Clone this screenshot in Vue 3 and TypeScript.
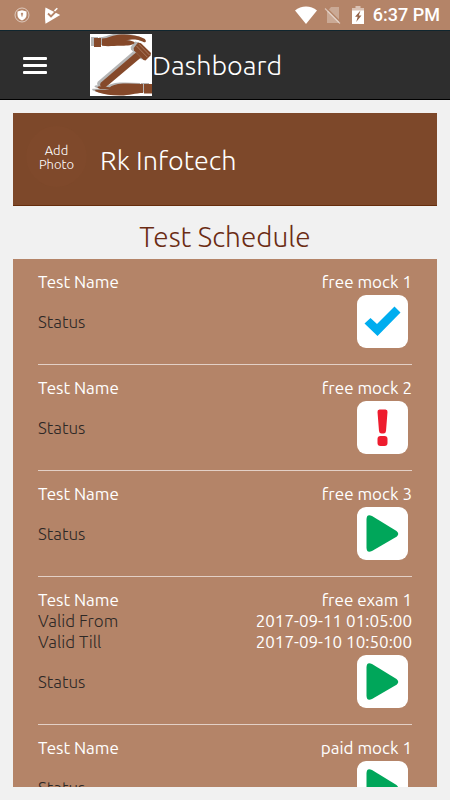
<script setup lang="ts">
type Status = 'done' | 'missed' | 'open'

interface Field {
  label: string
  value: string
}

interface Test {
  name: string
  fields: Field[]
  status: Status
}

const tests: Test[] = [
  { name: 'free mock 1', fields: [], status: 'done' },
  { name: 'free mock 2', fields: [], status: 'missed' },
  { name: 'free mock 3', fields: [], status: 'open' },
  {
    name: 'free exam 1',
    fields: [
      { label: 'Valid From', value: '2017-09-11 01:05:00' },
      { label: 'Valid Till', value: '2017-09-10 10:50:00' },
    ],
    status: 'open',
  },
  { name: 'paid mock 1', fields: [], status: 'open' },
]

const statusLabel: Record<Status, string> = {
  done: 'Completed',
  missed: 'Attention',
  open: 'Start test',
}
</script>

<template>
  <div class="screen">
    <div class="system">
      <svg class="shield" viewBox="0 0 16 16" width="16" height="16" aria-hidden="true">
        <circle cx="8" cy="8" r="7" fill="none" stroke="#fff" stroke-opacity="0.55" stroke-width="1" />
        <path d="M8 3.200 12.500 4.600V8c0 2.600-1.800 4.400-4.500 5.400C5.300 12.400 3.500 10.600 3.500 8V4.600Z" fill="#fff" />
        <path d="M8 5.800v3.600M6.900 6.900h2.200" stroke="#b48468" stroke-width="1.200" />
      </svg>
      <svg class="play-check" viewBox="0 0 17 17" width="17" height="17" aria-hidden="true">
        <path d="M1.500.5 16.200 8 1.500 16.700C.8 12 .8 5 1.500.5Z" fill="#fff" />
        <path d="M4 6.500 7 9.500 13.800 2.500" fill="none" stroke="#b48468" stroke-width="1.800" />
        <path d="M10.500 4 13.300 1.200" stroke="#fff" stroke-width="1.600" />
      </svg>
      <span class="spacer"></span>
      <svg class="wifi" viewBox="0 0 22 18" width="22" height="18" aria-hidden="true">
        <path d="M0 4.600C6-1 16-1 22 4.600L11 18Z" fill="#fff" />
      </svg>
      <svg class="no-sim" viewBox="0 0 18 18" width="18" height="18" aria-hidden="true">
        <path d="M3 5.500 7 1h8v16H3Z" fill="#fff" opacity="0.3" />
        <path d="M2.500 2 17 16.500" stroke="#b48468" stroke-width="1.500" />
        <path d="M1 2.500 16 17.500" stroke="#fff" stroke-opacity="0.5" stroke-width="1.300" />
      </svg>
      <svg class="battery" viewBox="0 0 12 18" width="12" height="18" aria-hidden="true">
        <path d="M3.500 0h5v2H12v3H0V2h3.500Z" fill="#fff" opacity="0.5" />
        <path d="M0 4.500h12V18H0Z" fill="#fff" />
        <path d="M8.500 4.500 3 10.800h2.700L4.200 16l5.300-6.500H6.800Z" fill="#94644a" />
      </svg>
      <time class="clock">6:37 PM</time>
    </div>

    <header class="bar">
      <button class="menu" type="button" aria-label="Menu">
        <i></i><i></i><i></i>
      </button>
      <svg class="logo" viewBox="0 0 62 62" width="62" height="62" aria-hidden="true">
        <rect width="62" height="62" fill="#fff" />
        <defs>
          <g id="logo-mark">
            <path d="M4 4h7v9H4Z" />
            <path d="M12 4.500C18 4.500 23 .5 31 .5c9 0 17 1 23 4 2.500 1.500 2.500 4 0 3.800C51 6 46 5.500 42 5.500l-6 .8c4 .2 9 1 8.500 2.700-1 2.500-9 2.800-14 2.700-7 0-12 1-18.500 0Z" />
            <path d="m46 18.500 5 5L16.500 52.500c-3 2.500-8.500 0-5.500-4Z" />
            <path d="m48 8.500 3 .8 10 9.700-.5 2.500-5 5-2-.5L44 16.500l-.3-2.500Z" />
            <path d="M54 50h8v9.500h-8Z" />
            <path d="M53 50c-9-.5-18-.8-25 0-4 .8-7 2-8 3.200l-10.500-1c-3 .6-2.500 2 1 2.800h9c-3 1-9 .6-14 .8-1 1 0 2 3 2.600 6 1.600 13 3.200 22 3.100 9 0 15-2.500 22.500-2.500Z" />
          </g>
        </defs>
        <use href="#logo-mark" fill="#b5b5b5" x="-3" y="-1" />
        <use href="#logo-mark" fill="#85492a" />
        <path d="M46.500 12 57.500 23.300M49 10.200 59.500 21" fill="none" stroke="#c09a84" stroke-width="0.600" />
      </svg>
      <h1>Dashboard</h1>
    </header>

    <main>
      <section class="profile">
        <button class="photo" type="button">Add<br />Photo</button>
        <span class="name">Rk Infotech</span>
      </section>

      <h2>Test Schedule</h2>

      <ul class="tests">
        <li v-for="test in tests" :key="test.name">
          <div class="line title">
            <span>Test Name</span><span>{{ test.name }}</span>
          </div>
          <div v-for="field in test.fields" :key="field.label" class="line">
            <span>{{ field.label }}</span><span class="value">{{ field.value }}</span>
          </div>
          <div class="status">
            <span>Status</span>
            <button type="button" :aria-label="statusLabel[test.status]">
              <svg viewBox="0 0 51 53" width="51" height="53" aria-hidden="true">
                <path v-if="test.status === 'done'" d="m7.500 28.500 6-5.500 6.500 6L37.500 11.500l6 6L20.500 41Z" fill="#00adef" />
                <g v-else-if="test.status === 'missed'" fill="#ee1c2e">
                  <path d="M22.500 8.500h6q2.200 0 2 2.500l-1.500 19q-.3 2.500-2.500 2.500h-2q-2.200 0-2.500-2.500L20.500 11q-.2-2.500 2-2.500Z" />
                  <rect x="20.500" y="35" width="10" height="10" rx="3" />
                </g>
                <path v-else d="M9.500 12.500v28Q9.500 46.500 15 44L39.500 29.700Q43 27 39.500 24L15 9Q9.500 6.500 9.500 12.500Z" fill="#00a65a" />
              </svg>
            </button>
          </div>
        </li>
      </ul>
    </main>
  </div>
</template>

<style>
body {
  margin: 0;
  background: #f1f1f1;
}
</style>

<style scoped>
.screen {
  display: flex;
  flex-direction: column;
  height: 100vh;
  overflow: hidden;
  font-family: "Ubuntu", "Noto Sans", "Open Sans", sans-serif;
  font-weight: 300;
  color: #fff;
}

button {
  padding: 0;
  border: 0;
  font: inherit;
  color: inherit;
  cursor: pointer;
}

svg {
  display: block;
}

.system {
  display: flex;
  flex: none;
  align-items: center;
  box-sizing: border-box;
  height: 30px;
  padding: 0 10px 0 14px;
  background: #b48468;
}

.play-check {
  margin-left: 14px;
}

.spacer {
  flex: 1;
}

.no-sim {
  margin-left: 7px;
}

.battery {
  margin-left: 10px;
}

.clock {
  margin-left: 9px;
  font: 500 18px/32px Roboto, sans-serif;
}

.bar {
  display: flex;
  flex: none;
  align-items: center;
  box-sizing: border-box;
  height: 70px;
  padding-left: 23px;
  border-top: 1px solid #10262f;
  border-bottom: 1px solid #000;
  background: #2e2e2e;
}

.menu {
  display: flex;
  flex-direction: column;
  gap: 4px;
  width: 24px;
  margin-right: 43px;
  background: none;
}

.menu i {
  height: 3px;
  border-radius: 1px;
  background: #fff;
}

h1,
h2 {
  margin: 0;
  font-weight: 300;
}

h1 {
  font-size: 27px;
  line-height: 40px;
}

main {
  display: flex;
  flex: 1;
  flex-direction: column;
  min-height: 0;
  padding: 13px;
}

.profile {
  display: flex;
  flex: none;
  align-items: flex-start;
  box-sizing: border-box;
  height: 93px;
  padding: 13px;
  border-bottom: 1px solid #662d0c;
  background: #7d482a;
}

.photo {
  width: 61px;
  height: 61px;
  margin-right: 13px;
  border-radius: 50%;
  background: #7f492b;
  font-size: 13px;
  line-height: 14px;
}

.name {
  font-size: 27px;
  line-height: 68px;
}

h2 {
  flex: none;
  padding: 10px 0 2px;
  color: #6b2c14;
  font-size: 28px;
  line-height: 41px;
  text-align: center;
}

.tests {
  flex: 1;
  min-height: 0;
  margin: 0;
  padding: 0 25px;
  overflow-y: auto;
  scrollbar-width: none;
  background: #b48468;
  list-style: none;
}

li {
  padding: 12px 0 16px;
  border-bottom: 1px solid #e3d0c6;
}

.line,
.status {
  display: flex;
  justify-content: space-between;
  color: #2d2826;
  font-size: 17px;
  line-height: 21px;
}

.title {
  color: #fff;
  font-weight: 400;
}

.value {
  color: #fff;
  font-weight: 400;
}

.status {
  align-items: center;
  padding: 3px 4px 0 0;
}

.status button {
  border-radius: 9px;
  background: #fff;
}
</style>
